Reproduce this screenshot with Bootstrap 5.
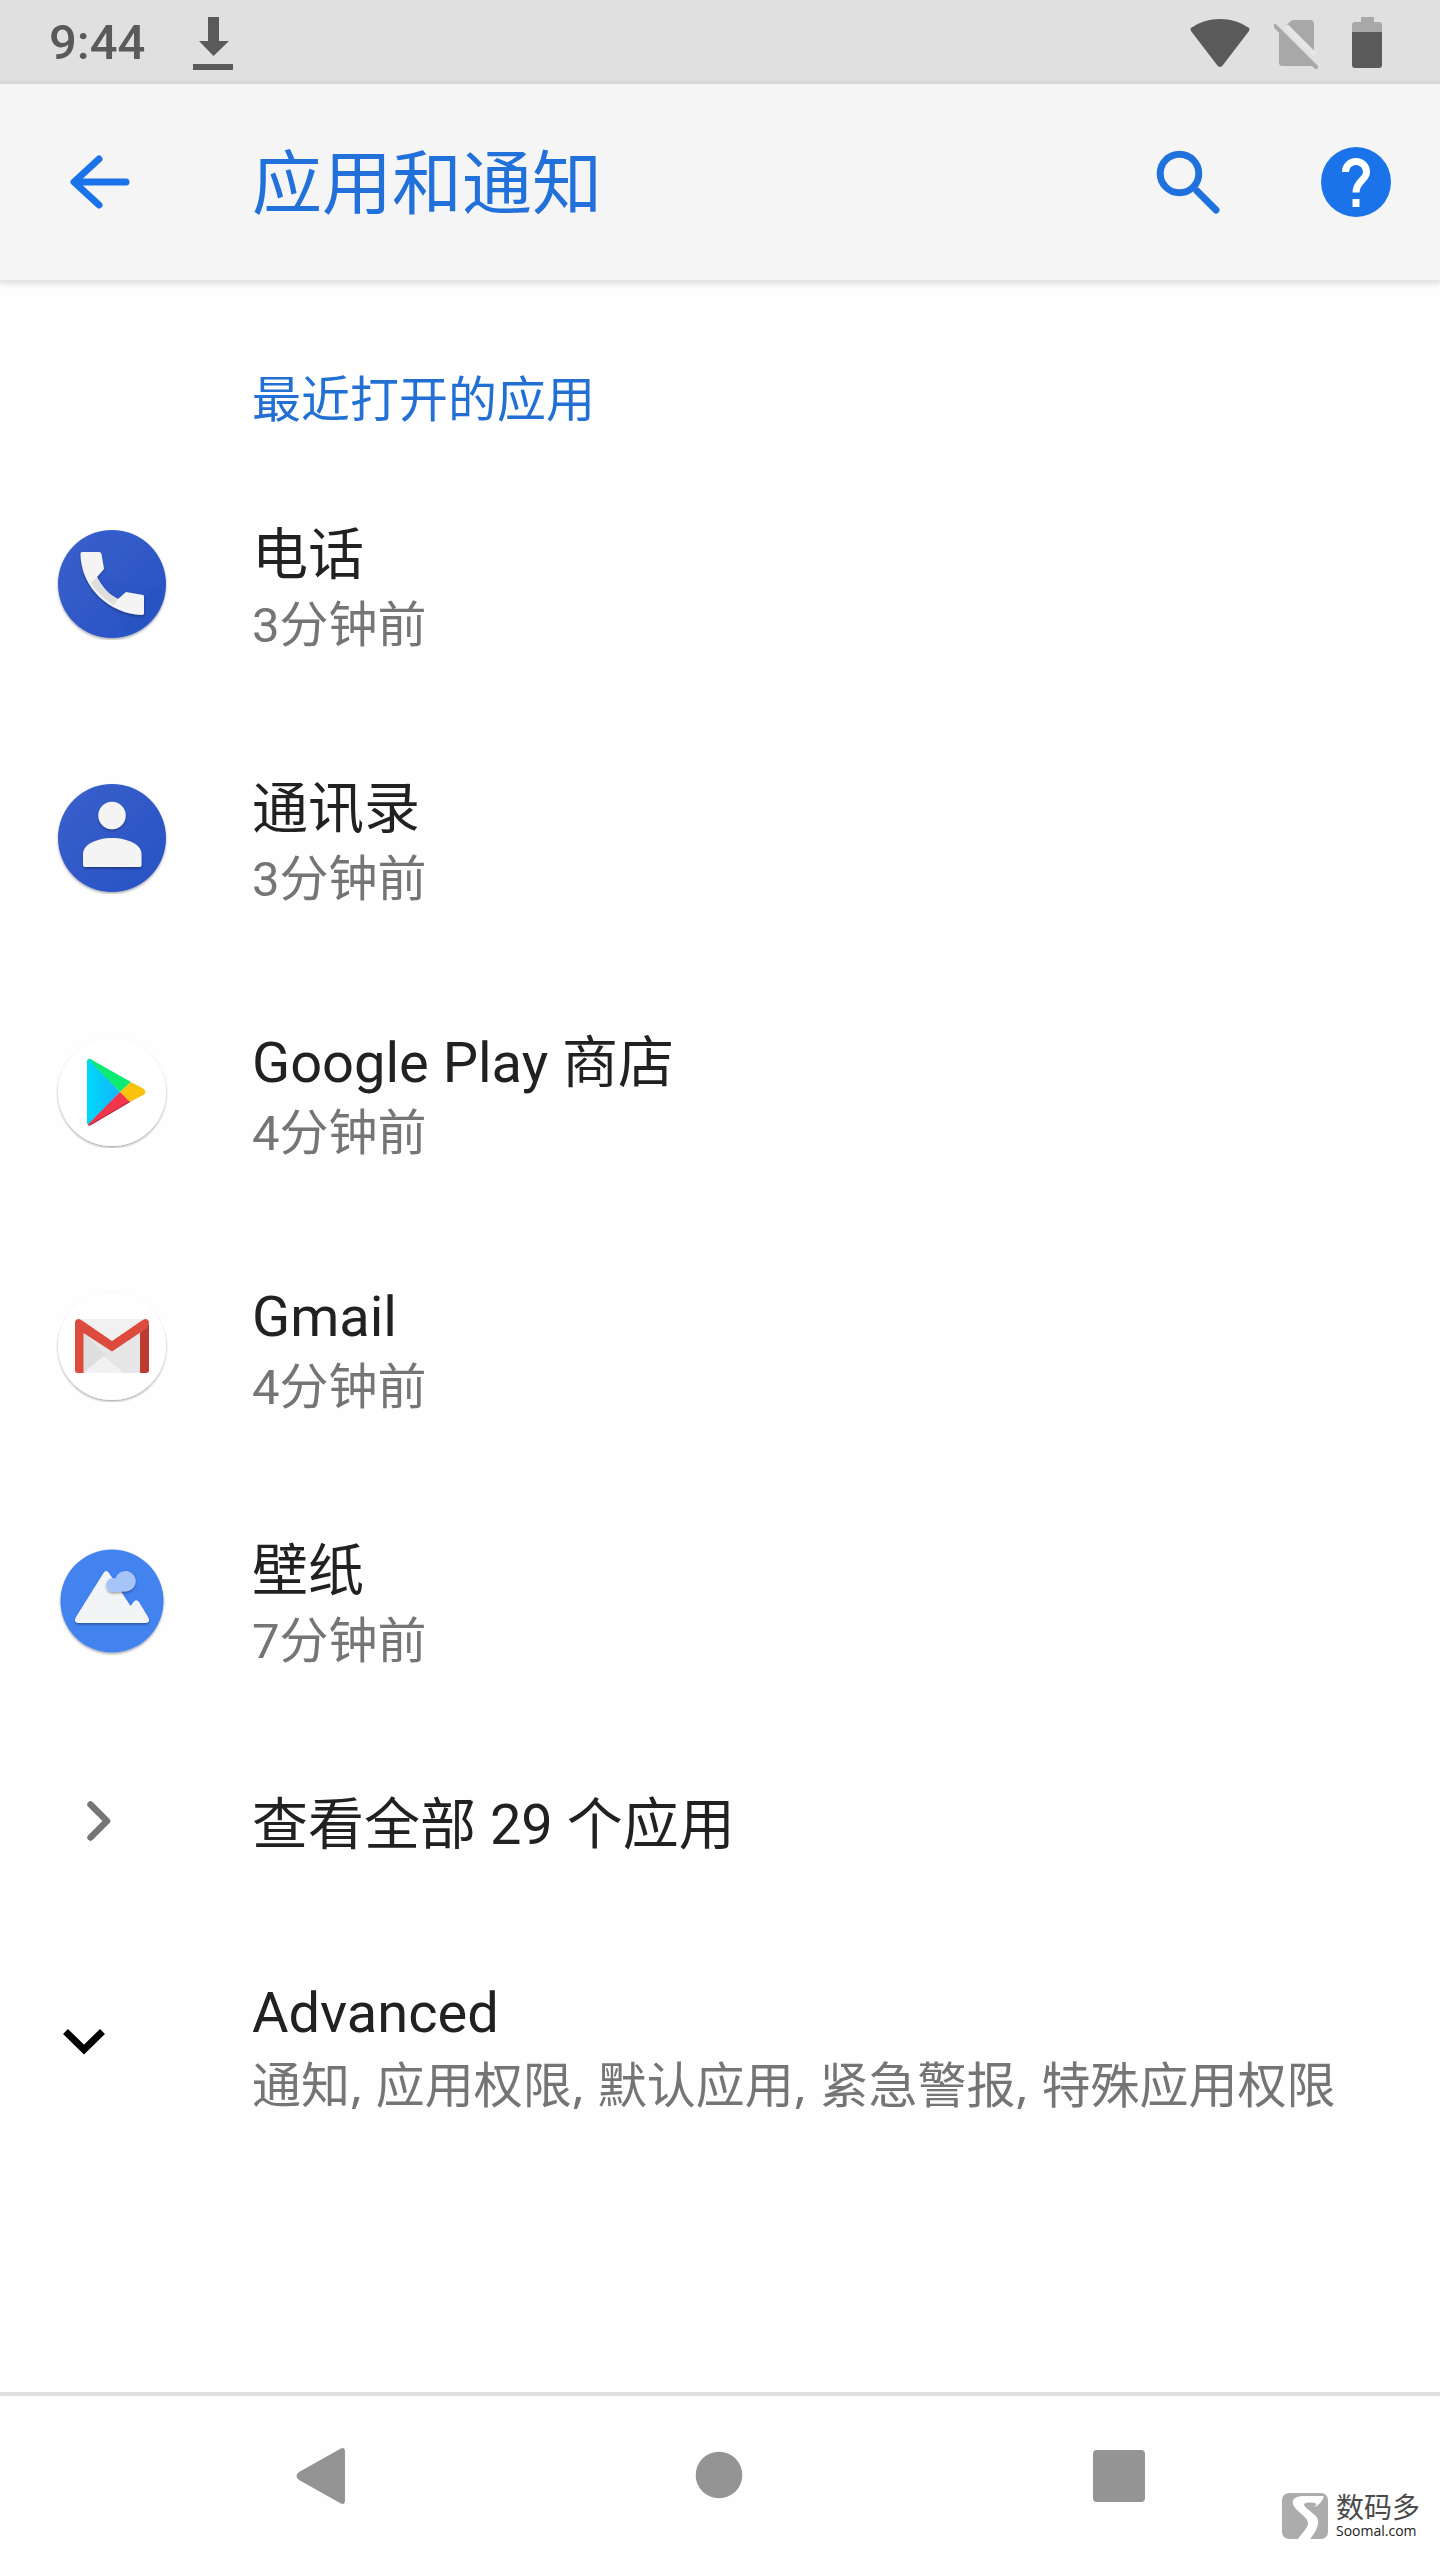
<!DOCTYPE html>
<html lang="zh-CN">
<head>
<meta charset="utf-8">
<meta name="viewport" content="width=device-width, initial-scale=1">
<title>应用和通知</title>
<link href="https://cdn.jsdelivr.net/npm/bootstrap@5.3.0/dist/css/bootstrap.min.css" rel="stylesheet">
<style>
  body { font-family: Roboto, "Noto Sans CJK SC", sans-serif; background: #fefefe; color: #212121; }
  svg { display: block; flex: none; }
  .status-bar { background: #e0e0e0; color: #5a5a5a; height: 84px; padding: 2px 58px 0 49px; }
  .status-time { font-size: 49px; line-height: 56px; font-weight: 500; }
  .status-gap { gap: 48px; }
  .app-bar { background: #f5f5f5; height: 196px; padding: 0 48px 0 56px; box-shadow: 0 2px 6px 2px rgba(0,0,0,.12); color: #1a73e8; }
  .app-title { font-size: 70px; line-height: 84px; font-weight: 400; color: #2270da; padding-top: 6px; }
  .lead-col { width: 112px; margin-right: 84px; }
  .bar-actions { gap: 96px; }
  .section-name { font-size: 49px; line-height: 66px; font-weight: 400; color: #2270d4; padding: 88px 56px 23px 252px; }
  .app-row { min-height: 254px; padding: 0 56px; border: 0; background: transparent; color: #212121; }
  .app-row.single { min-height: 188px; }
  .row-text { padding-top: 8px; }
  .row-name { font-size: 56px; line-height: 76px; }
  .row-note { font-size: 49px; line-height: 66px; color: #757575; }
  .row-note.topics { font-family: "Noto Sans", "Noto Sans CJK SC", sans-serif; }
  .nav-keys { border-top: 4px solid #e0e0e0; height: 168px; padding: 0 121px 4px; }
  .watermark { right: 20px; bottom: 19px; gap: 8px; color: #4a4a4a; }
  .wm-name { font: 400 28px/30px "Noto Sans CJK SC", sans-serif; }
  .wm-site { font: 400 14px/20px "Open Sans", sans-serif; color: #222; }
</style>
<script src="https://cdn.jsdelivr.net/npm/bootstrap@5.3.0/dist/js/bootstrap.bundle.min.js"></script>
</head>
<body class="d-flex flex-column min-vh-100">

<div class="status-bar d-flex align-items-center justify-content-between">
  <div class="d-flex align-items-center status-gap">
    <span class="status-time">9:44</span>
    <svg width="40" height="53" viewBox="0 0 40 53" fill="currentColor"><path d="M15 0h11v24h10L20.500 39 6 24h9zM0 47h40v6H0z"/></svg>
  </div>
  <div class="d-flex align-items-center">
    <svg class="me-4" width="60" height="53" viewBox="0 0 60 53" fill="currentColor"><path d="M1 11C18-1 42-1 59 11Q60 12 59 14L33 48Q30 52 27 48L1 14Q0 12 1 11Z"/></svg>
    <svg class="me-4" width="50" height="53" viewBox="0 0 50 53"><path d="M12 8l5-4q1-1 3-1h16q4 0 4 4v33zM5 12l32 37H9q-4 0-4-4z" fill="#a8a8a8"/><path d="M5 12l35 35q-1 2-3 2H9q-4 0-4-4z" fill="#a8a8a8"/><path d="M12 9l29 29" stroke="#e6e6e6" stroke-width="5"/><path d="M1 9l41 41" stroke="#a8a8a8" stroke-width="4" stroke-linecap="round"/></svg>
    <svg class="ms-1" width="30" height="53" viewBox="0 0 30 53"><path d="M9 0h13v5h5q3 0 3 3v8H0V8q0-3 3-3h6z" fill="#a8a8a8"/><path d="M0 15h30v33q0 3-3 3H3q-3 0-3-3z" fill="#5a5a5a"/></svg>
  </div>
</div>

<header class="app-bar d-flex align-items-center">
  <div class="lead-col">
    <button type="button" class="btn p-0 border-0" aria-label="返回">
      <svg width="88" height="72" viewBox="0 0 88 72" fill="none" stroke="#1a73e8" stroke-width="7" stroke-linecap="round" stroke-linejoin="round"><path d="M43 13L18 36l25 23M19 36h51"/></svg>
    </button>
  </div>
  <h1 class="app-title mb-0 flex-grow-1">应用和通知</h1>
  <div class="bar-actions d-flex">
    <button type="button" class="btn p-0 border-0" aria-label="搜索">
      <svg width="72" height="72" viewBox="0 0 72 72" fill="none" stroke="#1f72de"><circle cx="27.500" cy="27.500" r="19.300" stroke-width="7"/><path d="M45 45l19 19" stroke-width="7" stroke-linecap="round"/></svg>
    </button>
    <button type="button" class="btn p-0 border-0" aria-label="帮助">
      <svg width="72" height="72" viewBox="0 0 72 72"><circle cx="36" cy="36" r="35" fill="#1a73e8"/><path d="M25.500 26a10.500 10.500 0 0 1 21 0C46.500 34 36 35 36 46.500" fill="none" stroke="#fff" stroke-width="7"/><path d="M32.500 53h7v8h-7z" fill="#fff"/></svg>
    </button>
  </div>
</header>

<main class="flex-grow-1">
  <h2 class="section-name mb-0">最近打开的应用</h2>
  <div class="list-group list-group-flush">
    <a href="#" class="app-row list-group-item list-group-item-action d-flex align-items-center">
      <div class="lead-col">
        <svg width="112" height="112" viewBox="0 0 112 112">
          <defs>
            <linearGradient id="royal" x1="0" y1="0" x2="1" y2="1"><stop offset="0" stop-color="#3a60cb"/><stop offset="1" stop-color="#2752c4"/></linearGradient>
            <filter id="drop" x="-10%" y="-10%" width="120%" height="125%"><feDropShadow dx="0" dy="1.500" stdDeviation="1" flood-opacity=".35"/></filter>
          </defs>
          <circle cx="56" cy="56" r="54" fill="url(#royal)" filter="url(#drop)"/>
          <path d="M41 49L110 62Q106 100 70 108L62 87Z" fill="#1d46b2" opacity=".1"/>
          <path d="M26 24H43Q45 24 45.500 26L48 41 41 49C46 59 53 67 62 71L70 64 87 67Q88 67 88 69V85Q88 87 86 87C54 86 25 60 24.500 26Q24.500 24 26 24Z" fill="#f4f4f4" filter="url(#drop)"/>
          <path d="M41 49C46 59 53 67 62 71L58 77C48 71 38 61 35 55Z" fill="#dedede"/>
        </svg>
      </div>
      <div class="row-text"><div class="row-name">电话</div><div class="row-note">3分钟前</div></div>
    </a>
    <a href="#" class="app-row list-group-item list-group-item-action d-flex align-items-center">
      <div class="lead-col">
        <svg width="112" height="112" viewBox="0 0 112 112">
          <circle cx="56" cy="56" r="54" fill="url(#royal)" filter="url(#drop)"/>
          <g fill="#f4f4f4" filter="url(#drop)"><circle cx="56" cy="33.500" r="13.700"/><path d="M27 83V72C27 62 42 56 56 56S85.500 62 85.500 72V83q0 2-2 2H29q-2 0-2-2z"/></g>
        </svg>
      </div>
      <div class="row-text"><div class="row-name">通讯录</div><div class="row-note">3分钟前</div></div>
    </a>
    <a href="#" class="app-row list-group-item list-group-item-action d-flex align-items-center">
      <div class="lead-col">
        <svg width="112" height="112" viewBox="0 0 112 112">
          <defs><linearGradient id="sky" x1="0" y1="0" x2="1" y2="0"><stop offset="0" stop-color="#00d8fb"/><stop offset="1" stop-color="#15b4fb"/></linearGradient></defs>
          <circle cx="56" cy="56" r="54" fill="#fff" filter="url(#drop)"/>
          <path d="M31 25Q31 23 33 23L64 56 33 89Q31 89 31 87Z" fill="url(#sky)"/>
          <path d="M32 23Q34 22 36 24L75 46 64 56Z" fill="#0bea72"/>
          <path d="M75 46L88 53Q91 56 88 58.500L74 66 64 56Z" fill="#fbc20b"/>
          <path d="M64 56L74 66 35 89Q33 90 32 88.500Z" fill="#f3354b"/>
          <path d="M74 65L35 88 32 89Q33 90 35 89L74 66Z" fill="#a92b43"/>
        </svg>
      </div>
      <div class="row-text"><div class="row-name">Google Play 商店</div><div class="row-note">4分钟前</div></div>
    </a>
    <a href="#" class="app-row list-group-item list-group-item-action d-flex align-items-center">
      <div class="lead-col">
        <svg width="112" height="112" viewBox="0 0 112 112">
          <circle cx="56" cy="56" r="54" fill="#fff" filter="url(#drop)"/>
          <path d="M22 29H90V83H22Z" fill="#e6e6e6"/>
          <path d="M22 29H90L56 52Z" fill="#f1f1f1"/>
          <path d="M27 43L50 65 27 83Z" fill="#dedede"/>
          <path d="M27 83L48 66 68 83Z" fill="#f1f1f1"/>
          <path d="M84 43L93 34V80q0 3-3 3h-6z" fill="#bd3a30"/>
          <path d="M19 33Q19 29 23 29 24 29 26 30.500L56 51 86 30.500Q88 29 89 29 93 29 93 33 93 35 91 38L56 61.500 27.500 43V83H22q-3 0-3-3z" fill="#dd4a3e"/>
        </svg>
      </div>
      <div class="row-text"><div class="row-name">Gmail</div><div class="row-note">4分钟前</div></div>
    </a>
    <a href="#" class="app-row list-group-item list-group-item-action d-flex align-items-center">
      <div class="lead-col">
        <svg width="112" height="112" viewBox="0 0 112 112">
          <circle cx="56" cy="57" r="51.500" fill="#4283f0" filter="url(#drop)"/>
          <path d="M47.500 29Q50 25 53 29L74.500 62 78 57.500Q80.500 55 83 58L92 73Q95 78 90 79H22Q17 78 20 73Z" fill="#f3f4f5" filter="url(#drop)"/>
          <path d="M56 48a7 7 0 1 1 3.500-13.500A10.300 10.300 0 1 1 69 47.500Z" fill="#a6c4f8" filter="url(#drop)"/>
        </svg>
      </div>
      <div class="row-text"><div class="row-name">壁纸</div><div class="row-note">7分钟前</div></div>
    </a>
    <a href="#" class="app-row single list-group-item list-group-item-action d-flex align-items-center">
      <div class="lead-col">
        <svg width="112" height="112" viewBox="0 0 112 112" fill="none" stroke="#757575" stroke-width="6.500" stroke-linecap="round" stroke-linejoin="round"><path d="M34.500 39.500L51 56 34.500 72.500"/></svg>
      </div>
      <div class="row-text"><div class="row-name">查看全部 29 个应用</div></div>
    </a>
    <a href="#" class="app-row list-group-item list-group-item-action d-flex align-items-center">
      <div class="lead-col">
        <svg width="112" height="112" viewBox="0 0 112 112" fill="none" stroke="#000" stroke-width="7"><path d="M9.500 45.500L28 63.500 46.500 45.500"/></svg>
      </div>
      <div class="row-text"><div class="row-name">Advanced</div><div class="row-note topics">通知, 应用权限, 默认应用, 紧急警报, 特殊应用权限</div></div>
    </a>
  </div>
</main>

<nav class="nav-keys d-flex align-items-center position-relative">
  <div class="flex-fill d-flex justify-content-center"><button type="button" class="btn p-0 border-0" aria-label="后退"><svg width="50" height="56" viewBox="0 0 50 56" fill="#949494"><path d="M45 1Q50-2 50 4V52Q50 58 45 55L4 32Q-1 28 4 24Z"/></svg></button></div>
  <div class="flex-fill d-flex justify-content-center"><button type="button" class="btn p-0 border-0" aria-label="主屏幕"><svg width="50" height="56" viewBox="0 0 50 56" fill="#949494"><circle cx="25" cy="27" r="23.300"/></svg></button></div>
  <div class="flex-fill d-flex justify-content-center"><button type="button" class="btn p-0 border-0" aria-label="最近任务"><svg width="52" height="56" viewBox="0 0 52 56" fill="#949494"><rect y="2" width="52" height="52" rx="4"/></svg></button></div>
  <div class="watermark position-absolute d-flex align-items-center">
    <svg width="46" height="46" viewBox="0 0 46 46"><rect width="46" height="46" rx="7" fill="#acacac"/><path d="M42 3H20C10 4 8 9 14 16 20 22 27 26 26 31 25 36 19 41 16 46H28C33 40 37 33 36 27 35 21 24 17 22 12 22 9 29 9 35 11L32 14Q39 12 42 3Z" fill="#fff"/></svg>
    <div><div class="wm-name">数码多</div><div class="wm-site">Soomal.com</div></div>
  </div>
</nav>
</body>
</html>
